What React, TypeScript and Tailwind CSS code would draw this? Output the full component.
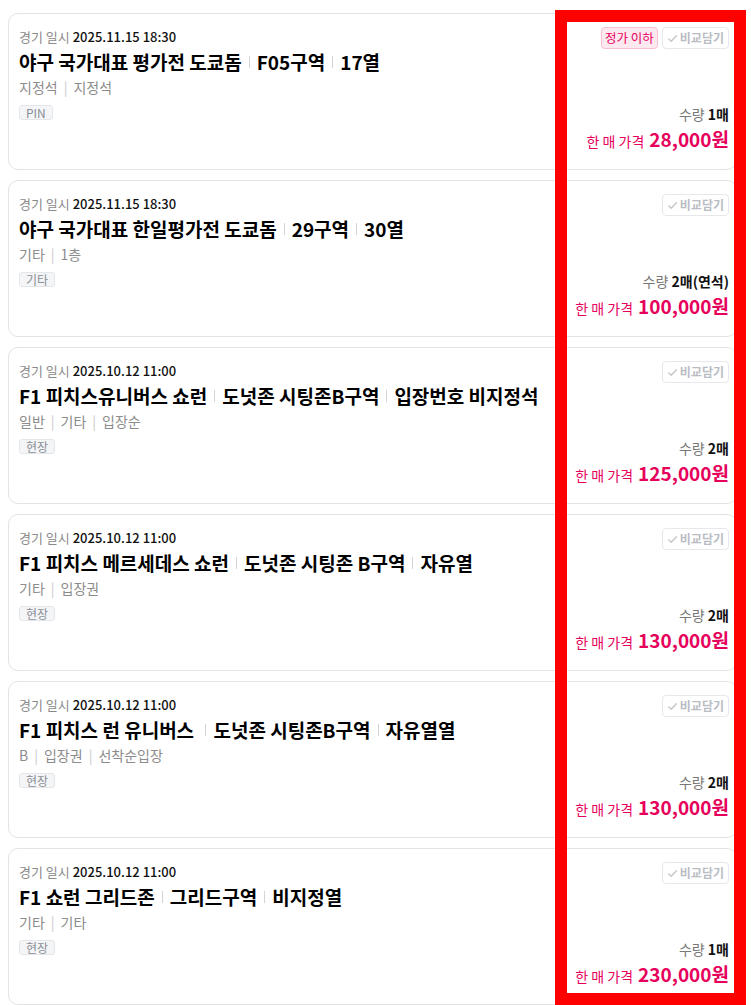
const tickets = [
  {
    date: "2025.11.15 18:30",
    title: ["야구 국가대표 평가전 도쿄돔", "F05구역", "17열"],
    info: ["지정석", "지정석"],
    tag: "PIN",
    belowFace: true,
    qty: "1매",
    price: "28,000",
  },
  {
    date: "2025.11.15 18:30",
    title: ["야구 국가대표 한일평가전 도쿄돔", "29구역", "30열"],
    info: ["기타", "1층"],
    tag: "기타",
    belowFace: false,
    qty: "2매(연석)",
    price: "100,000",
  },
  {
    date: "2025.10.12 11:00",
    title: ["F1 피치스유니버스 쇼런", "도넛존 시팅존B구역", "입장번호 비지정석"],
    info: ["일반", "기타", "입장순"],
    tag: "현장",
    belowFace: false,
    qty: "2매",
    price: "125,000",
  },
  {
    date: "2025.10.12 11:00",
    title: ["F1 피치스 메르세데스 쇼런", "도넛존 시팅존 B구역", "자유열"],
    info: ["기타", "입장권"],
    tag: "현장",
    belowFace: false,
    qty: "2매",
    price: "130,000",
  },
  {
    date: "2025.10.12 11:00",
    title: ["F1 피치스 런 유니버스\u00a0", "도넛존 시팅존B구역", "자유열열"],
    info: ["B", "입장권", "선착순입장"],
    tag: "현장",
    belowFace: false,
    qty: "2매",
    price: "130,000",
  },
  {
    date: "2025.10.12 11:00",
    title: ["F1 쇼런 그리드존", "그리드구역", "비지정열"],
    info: ["기타", "기타"],
    tag: "현장",
    belowFace: false,
    qty: "1매",
    price: "230,000",
  },
];

function CheckIcon() {
  return (
    <svg width="11" height="11" viewBox="0 0 12 12" fill="none" className="mr-[2px]">
      <path d="M2 6.5l2.6 2.6L10.2 3" stroke="#c4c8cd" strokeWidth="1.6" strokeLinecap="round" strokeLinejoin="round" />
    </svg>
  );
}

export default function App() {
  return (
    <div className="relative min-h-screen bg-white font-['Noto_Sans_CJK_KR',sans-serif]">
      <div className="flex flex-col gap-[10px] pt-[13px] pl-[8px] pr-[14px]">
        {tickets.map((t, i) => (
          <div
            key={i}
            className="flex h-[157px] justify-between rounded-[10px] border border-[#e3e3e3] bg-white pl-[10px] pr-[7px] pt-[13px] pb-[15px]"
          >
            <div className="flex flex-col">
              <p className="text-[13px] leading-[20px] text-[#111]">
                <span className="text-[#8a8a8a]">경기 일시</span> <span className="font-medium">{t.date}</span>
              </p>
              <h3 className="mt-[2px] flex items-center whitespace-pre text-[19px] font-semibold leading-[26px] text-black">
                {t.title.map((part, j) => (
                  <span key={j} className="flex items-center">
                    {j > 0 && <span className="mx-[7px] inline-block h-[12px] w-px bg-[#d4d4d4]" />}
                    {part}
                  </span>
                ))}
              </h3>
              <p className="mt-[2px] flex items-center text-[14px] leading-[20px] text-[#8c8c8c]">
                {t.info.map((part, j) => (
                  <span key={j} className="flex items-center">
                    {j > 0 && <span className="mx-[6px] text-[#c8c8c8]">|</span>}
                    {part}
                  </span>
                ))}
              </p>
              <div className="mt-[8px] flex">
                <span className="flex h-[15px] items-center rounded-[3px] border border-[#e4e6ea] bg-[#f4f5f7] px-[6px] text-[12px] text-[#8a8f96]">
                  {t.tag}
                </span>
              </div>
            </div>

            <div className="flex flex-col items-end justify-between">
              <div className="flex gap-[4px]">
                {t.belowFace && (
                  <span className="flex h-[22px] items-center rounded-[4px] border border-[#f8bfd2] bg-[#fde9f0] px-[3px] text-[12.5px] text-[#e6005c]">
                    정가 이하
                  </span>
                )}
                <button className="flex h-[22px] items-center rounded-[4px] border border-[#e6e8eb] bg-white px-[4px] text-[12px] font-semibold text-[#b9bdc3]">
                  <CheckIcon />
                  비교담기
                </button>
              </div>
              <div className="flex flex-col items-end gap-[2px]">
                <p className="text-[14px] leading-[20px] text-[#111]">
                  <span className="text-[#777]">수량</span> <span className="font-semibold">{t.qty}</span>
                </p>
                <p className="flex items-baseline text-[14px] leading-[26px] text-[#e6005c]">
                  <span className="mr-[5px]">한 매 가격</span>
                  <span className="text-[19px] font-bold">{t.price}원</span>
                </p>
              </div>
            </div>
          </div>
        ))}
      </div>

      <div className="pointer-events-none absolute left-[555px] top-[10px] h-[995px] w-[191px] border-[12px] border-[#ff0000]" />
    </div>
  );
}
